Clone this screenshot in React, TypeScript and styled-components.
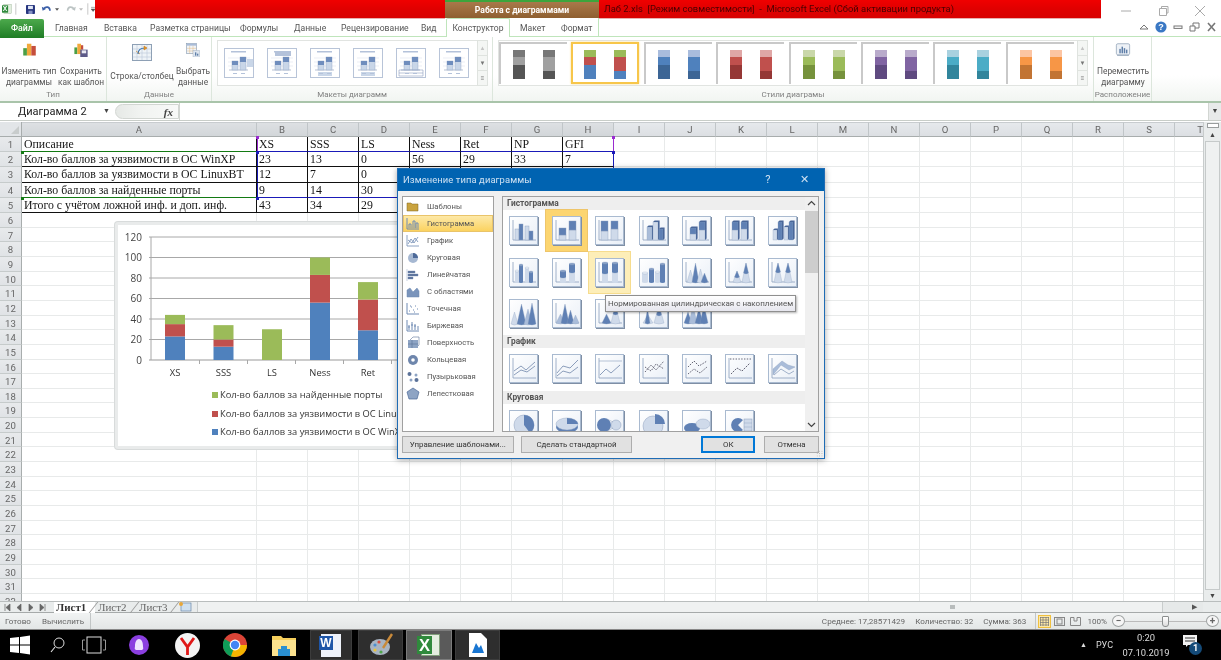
import React from 'react';
import styled, { createGlobalStyle } from 'styled-components';

const Global = createGlobalStyle`
  html, body { margin: 0; padding: 0; background: #fff; overflow: hidden; }
  * { box-sizing: border-box; }
`;
const UI = `Roboto, "Open Sans", sans-serif`;

const Page = styled.div`
  width: 1221px; height: 660px; display: flex; flex-direction: column; overflow: hidden;
  font-family: ${UI}; filter: blur(0.35px); background: #fff;
`;
const TitleRow = styled.div`display: flex; height: 18px; align-items: stretch; background: #fff;`;
const Qat = styled.div`width: 95px; display: flex; align-items: center; gap: 3px; padding-left: 2px;`;
const RedBand = styled.div<{ $w: number }>`
  width: ${p => p.$w}px; background: linear-gradient(#f00000, #e00000 50%, #d80000);
  box-shadow: 0 1px 0 #e8b0b0; color: #4a0000; font-size: 9.4px; line-height: 18px; white-space: pre; overflow: hidden; padding-left: 5px;
`;
const ChartTools = styled.div`
  width: 154px; background: linear-gradient(#a8794a, #8f5f30); border-top: 2px solid #3ca53c;
  color: #fff; font-weight: 700; font-size: 8.6px; text-align: center; line-height: 17px;
`;
const WinControls = styled.div`flex: 1; display: flex; justify-content: flex-end; gap: 25px; padding: 5px 15px 0 0;`;

const TabRow = styled.div`display: flex; height: 19px; align-items: stretch; position: relative; border-bottom: 1px solid #bfe5bb;`;
const FileTab = styled.div`
  width: 44px; height: 19px; margin-top: 1px; background: linear-gradient(#4ca94c, #1f7d25); color: #fff; font-size: 8.8px; font-weight: 500;
  text-align: center; line-height: 18px; border-radius: 2px 2px 0 0;
`;
const Tab = styled.div<{ $x: number }>`
  position: absolute; left: ${p => p.$x}px; top: 0; font-size: 8.6px; line-height: 20px; color: #555;
  white-space: nowrap;
`;
const ActiveTab = styled.div`
  position: absolute; left: 446px; top: 0; width: 64px; height: 19px; background: #fff; border: 1px solid #bfe5bb; border-bottom: none;
  border-radius: 2px 2px 0 0; font-size: 8.6px; line-height: 19px; color: #555; text-align: center;
`;
const ContextEdge = styled.div`
  position: absolute; left: 510px; top: 0; width: 89px; height: 18px; border-right: 1px solid #bfe5bb; pointer-events: none;
`;
const HelpRow = styled.div`position: absolute; right: 4px; top: 3px; display: flex; align-items: center; gap: 6px;`;

const Ribbon = styled.div`
  height: 66px; display: flex; background: linear-gradient(#fff, #fff 60%, #f2f5f2 100%); border-bottom: 2px solid #a9c4aa;
`;
const Group = styled.div<{ $w: number }>`
  width: ${p => p.$w}px; display: flex; flex-direction: column; border-right: 1px solid #dce6dc; flex: none;
`;
const GroupBody = styled.div`flex: 1; display: flex; min-height: 0;`;
const GroupLabel = styled.div`height: 14px; text-align: center; font-size: 8px; line-height: 15px; color: #808080; white-space: nowrap;`;
const BigButton = styled.div<{ $w: number }>`
  width: ${p => p.$w}px; display: flex; flex-direction: column; align-items: center; padding-top: 6px; flex: none;
  font-size: 8.4px; line-height: 10.5px; color: #555; text-align: center; white-space: nowrap;
  svg { height: 19px; margin-bottom: 9px; }
`;
const Gallery = styled.div<{ $w: number; $ml: number }>`
  width: ${p => p.$w}px; height: 46px; margin: 3px 0 0 ${p => p.$ml}px; background: #fff; border: 1px solid #e1e4e1;
  display: flex; align-items: center; position: relative; flex: none;
`;
const GalleryScroll = styled.div`
  position: absolute; right: -11px; top: -1px; width: 11px; height: 46px; border: 1px solid #dfe3df; background: #f4f6f4;
  display: flex; flex-direction: column; font-size: 6px; color: #777; text-align: center;
  span { flex: 1; line-height: 14px; border-bottom: 1px solid #dfe3df; }
  span:last-child { border-bottom: none; }
  span:first-child { color: #c4c4c4; }
`;
const StyleThumb = styled.div<{ $sel?: boolean }>`
  width: 68px; height: 42px; margin-right: 4.4px; flex: none; display: flex; justify-content: center; gap: 18px; padding-top: 6px;
  border-top: 2px solid #c9c9c9; border-left: 2px solid #c9c9c9; background: #fff;
  ${p => p.$sel ? 'border: 2px solid #f7c64a; box-shadow: 0 0 2px #f7d98a;' : ''}
`;
const StackBar = styled.div`width: 12px; height: 29px; display: flex; flex-direction: column;`;
const Seg = styled.div<{ $h: number; $c: string }>`height: ${p => p.$h}px; background: ${p => p.$c};`;

const FormulaBar = styled.div`height: 18px; display: flex; align-items: stretch; border-bottom: 1px solid #c8cdc8; background: #fff;`;
const NameBox = styled.div`width: 115px; font-size: 11px; line-height: 17px; padding-left: 18px; color: #222; position: relative;`;
const NameArrow = styled.span`position: absolute; right: 5px; top: 0; font-size: 7px; color: #444;`;
const FxWrap = styled.div`
  width: 64px; margin: 1px 0; display: flex; align-items: center; justify-content: flex-end; padding-right: 5px; background: linear-gradient(90deg,#e6e9e6,#f1f3f1 40%,#f8f9f8);
  border-radius: 9px 0 0 9px; border: 1px solid #d2d6d2; font: italic 700 11px "Liberation Serif", serif; color: #444;
`;
const FormulaInput = styled.div`flex: 1; border: 1px solid #d2d6d2; border-width: 0 1px;`;
const FormulaDrop = styled.div`width: 12px; font-size: 7px; color: #444; text-align: center; line-height: 17px; background: #e8eaea;`;

const Sheet = styled.div`height: 479px; position: relative; overflow: hidden; margin-top: 1px; display: flex; flex: none;`;
const GridWrap = styled.div`flex: 1; overflow: hidden; display: grid; grid-template-columns: 22px 235px repeat(19, 51px); grid-template-rows: 15px repeat(5, 15.2px) repeat(27, 14.67px); align-content: start;`;
const ColHead = styled.div<{ $on?: boolean }>`
  background: ${p => p.$on ? 'linear-gradient(#dde0e3,#d2d6d9)' : 'linear-gradient(#e6e9ec,#dcdfe3)'}; border-right: 1px solid #c0c5c8; border-bottom: 1px solid #a8adad; border-top: 1px solid #c8cccf;
  font-size: 9.6px; line-height: 13px; text-align: center; color: #666;
`;
const RowHead = styled.div`
  background: linear-gradient(#e8eaec,#e0e3e6); border-right: 1px solid #a8adad; border-bottom: 1px solid #c6cbcb;
  font-size: 9.6px; line-height: 15px; text-align: center; color: #666;
`;
const Corner = styled.div`background: #e2e5e8; border-right: 1px solid #a8adad; border-bottom: 1px solid #a8adad; position: relative;
  &::after { content: ''; position: absolute; right: 2px; bottom: 2px; border: 4px solid transparent; border-right-color: #c8cccc; border-bottom-color: #c8cccc; }
`;
const Cell = styled.div<{ $t?: boolean; $lft?: string; $bot?: string; $rgt?: string }>`
  border-right: 1px solid ${p => p.$rgt ? p.$rgt : p.$t ? '#111' : '#e8eaea'}; border-bottom: 1px solid ${p => p.$bot ? p.$bot : p.$t ? '#111' : '#e8eaea'};
  ${p => p.$lft ? `box-shadow: inset 1px 0 0 ${p.$lft};` : ''}
  font: ${p => p.$t ? '11.8px/15px "Liberation Serif", serif' : '10px sans-serif'}; color: #151515; padding-left: 2px; white-space: nowrap; overflow: hidden;
`;
const Handle = styled.div<{ $x: number; $y: number; $c: string }>`
  position: absolute; left: ${p => p.$x - 1.5}px; top: ${p => p.$y - 1.5}px; width: 3px; height: 3px; background: ${p => p.$c};
`;
const VScroll = styled.div`
  position: absolute; right: 0; top: 0; bottom: 0; width: 18px; background: #e9ecec; border-left: 1px solid #c8cccc;
  display: flex; flex-direction: column; align-items: center; font-size: 7px; color: #444; line-height: 10px;
`;
const VSplit = styled.div`width: 12px; height: 5px; background: #fff; border: 1px solid #9a9e9e; margin: 1px 0 2px;`;
const VThumb = styled.div`width: 15px; height: 452px; background: #eff1f1; border: 1px solid #c6caca; margin: 1px 0;`;

const ChartBox = styled.div`
  position: absolute; left: 115px; top: 100px; width: 340px; height: 227px; background: #fff; border: 3px solid #e9ebeb; border-radius: 3px; box-shadow: 0 0 0 1px #d8dbdb;
`;

const Dialog = styled.div`
  position: absolute; left: 397px; top: 46px; width: 428px; height: 291px; background: #f0f0f0; border: 1px solid #1f6cb5; box-shadow: 0 1px 6px rgba(0,0,0,.35);
  display: flex; flex-direction: column;
`;
const DlgTitle = styled.div`height: 22px; background: #0063b1; color: #cfe2f3; font-size: 9.4px; line-height: 21px; padding-left: 5px; display: flex; flex: none; letter-spacing: .1px;`;
const DlgTitleText = styled.span`flex: 1;`;
const DlgBtn = styled.span<{ $w: number }>`width: ${p => p.$w}px; color: #cfe2f3; text-align: center; font-size: 11px;`;
const DlgBody = styled.div`display: flex; gap: 8px; padding: 5px 5px 0 4px; height: 241px; flex: none;`;
const LeftPanel = styled.div`width: 92px; background: #fff; border: 1px solid #a0a0a0; padding-top: 1px; flex: none;`;
const LeftItem = styled.div<{ $sel?: boolean }>`
  height: 17px; display: flex; align-items: center; gap: 7px; padding-left: 3px; font-size: 7.7px; color: #555; white-space: nowrap;
  ${p => p.$sel ? 'background: linear-gradient(#fde9a8,#fbd260); border: 1px solid #e9c46a; padding-left: 2px;' : ''}
`;
const RightPanel = styled.div`flex: 1; background: #fff; border: 1px solid #a0a0a0; display: flex; overflow: hidden;`;
const RightList = styled.div`flex: 1; overflow: hidden; display: flex; flex-direction: column;`;
const SecHead = styled.div<{ $mt?: number }>`height: 13px; margin-top: ${p => p.$mt || 0}px; background: #eeeeee; font-size: 8.4px; font-weight: 700; color: #555; line-height: 12px; padding-left: 4px; flex: none;`;
const ThumbGrid = styled.div`display: grid; grid-template-columns: repeat(7, 29px); column-gap: 14.2px; row-gap: 12.6px; padding: 6px 0 0 6px; flex: none;`;
const ThumbCell = styled.div<{ $sel?: boolean; $hot?: boolean }>`
  width: 29px; height: 29px; background: linear-gradient(135deg,#fff,#e9eff7); border: 1px solid #a9bad0; box-shadow: 1px 1px 0 #7f8fa5; position: relative;
  ${p => p.$sel ? 'box-shadow: 1px 1px 0 #7f8fa5, 0 0 0 6px #fcd570, 0 0 0 7px #eec56a;' : ''}
  ${p => p.$hot ? 'box-shadow: 1px 1px 0 #7f8fa5, 0 0 0 6px #fdeeb8, 0 0 0 7px #f6dc8e;' : ''}
`;
const ListScroll = styled.div`
  width: 13px; background: #f0f0f0; display: flex; flex-direction: column; align-items: center; flex: none; justify-content: space-between; position: relative; padding: 3px 0;
`;
const ListThumb = styled.div`position: absolute; top: 14px; left: 0; width: 13px; height: 62px; background: #cdcdcd;`;
const DlgFoot = styled.div`display: flex; padding: 4px 5px 0 4px; align-items: center;`;
const DlgButton = styled.div<{ $w: number; $ml?: number; $def?: boolean }>`
  width: ${p => p.$w}px; margin-left: ${p => p.$ml || 0}px; height: 17px; background: #e1e1e1; border: ${p => p.$def ? '2px solid #0078d7' : '1px solid #adadad'};
  font-size: 7.9px; line-height: ${p => p.$def ? 13 : 15}px; text-align: center; color: #333; white-space: nowrap;
`;
const Tip = styled.div`
  position: absolute; left: 207px; top: 126px; height: 17px; padding: 0 2px; background: linear-gradient(#fff,#e6e6ee); border: 1px solid #8f8f8f; font-size: 8px; line-height: 15px; color: #555; white-space: nowrap; box-shadow: 1px 1px 2px rgba(0,0,0,.3); z-index: 3;
`;
const ResizeGrip = styled.div`
  position: absolute; right: 1px; bottom: 1px; width: 7px; height: 7px; background: radial-gradient(#aaa 40%, transparent 45%) 0 0 / 2.4px 2.4px;
`;

const SheetTabs = styled.div`height: 12px; display: flex; background: #e9ecec; border-top: 1px solid #b9bdbd; border-bottom: 1px solid #a6aaaa; flex: none; align-items: center; position: relative;`;
const TabNav = styled.div`width: 54px; flex: none; padding-left: 3px; display: flex;`;
const SheetTab = styled.div<{ $on?: boolean; $w: number }>`
  width: ${p => p.$w}px; height: 11px; flex: none; font: ${p => p.$on ? '700' : '400'} 11px/11px "Liberation Serif", serif; color: ${p => p.$on ? '#333' : '#666'}; padding-left: ${p => p.$on ? 2 : 3}px; background: ${p => p.$on ? '#fff' : 'transparent'}; white-space: nowrap; position: relative;
  &::after { content: ''; position: absolute; right: 1px; top: 0; bottom: 0; width: 1px; background: #999; transform: skewX(-38deg); }
`;
const HScroll = styled.div`position: absolute; left: 197px; right: 18px; top: 0; bottom: 0; background: #e6e9e9; border-left: 1px solid #c8cccc; display: flex; justify-content: flex-end; align-items: center; color: #555; font-size: 7px; padding-right: 6px;`;
const HThumb = styled.div`position: absolute; left: 0; width: 965px; top: 0; bottom: 0; background: #eff1f1; border-right: 1px solid #c8cccc;`;
const Grip = styled.div`position: absolute; left: 752px; top: 3px; width: 5px; height: 4px; background: #b8bcbc;`;

const StatusBar = styled.div`height: 17px; display: flex; align-items: center; background: linear-gradient(#f1f3f3,#e3e6e6); font-size: 8.1px; color: #666; flex: none; border-bottom: 1px solid #888; padding-right: 2px;`;
const StatusText = styled.span<{ $ml?: number; $auto?: boolean }>`margin-left: ${p => p.$auto ? 'auto' : `${p.$ml || 0}px`}; white-space: nowrap;`;
const StatusDiv = styled.div<{ $ml?: number }>`width: 1px; height: 16px; background: #c2c6c6; margin-left: ${p => p.$ml ?? 6}px;`;
const ViewBtn = styled.div<{ $on?: boolean; $ml: number }>`
  width: 13px; height: 13px; margin-left: ${p => p.$ml}px; border: 1px solid ${p => p.$on ? '#f0c040' : 'transparent'}; background: ${p => p.$on ? '#fde9a8' : 'transparent'}; display: flex; align-items: center; justify-content: center;
`;
const ZoomTrack = styled.div`width: 81px; height: 1px; background: #bbb; position: relative;`;
const ZoomKnob = styled.div`position: absolute; left: 37px; top: -5px; width: 7px; height: 11px; background: linear-gradient(#fff,#ddd); border: 1px solid #8a8e8e; border-radius: 1px 1px 3px 3px;`;
const ZoomRound = styled.div<{ $ml?: number }>`width: 13px; height: 12px; margin-left: ${p => p.$ml || 0}px; border-radius: 50%; border: 1px solid #9ca0a0; background: #f6f6f6; font-size: 10px; font-weight: 700; line-height: 9px; text-align: center; color: #666; flex: none;`;

const Taskbar = styled.div`height: 30px; background: #000; display: flex; align-items: stretch; flex: none;`;
const TaskSlot = styled.div<{ $w: number; $ml?: number; $box?: 'idle' | 'on' }>`
  width: ${p => p.$w}px; margin-left: ${p => p.$ml || 0}px; display: flex; align-items: center; justify-content: center; flex: none;
  ${p => p.$box === 'idle' ? 'background: #2e2e2e; box-shadow: inset 0 0 0 1px #3c3c3c;' : ''}
  ${p => p.$box === 'on' ? 'background: #5a5a5a; box-shadow: inset 0 0 0 1px #7c7c7c;' : ''}
`;
const Tray = styled.div`margin-left: auto; margin-right: 15px; display: flex; align-items: center; color: #ddd; font-size: 9px;`;
const Caret = styled.span`font-size: 7px; margin-right: 9px;`;
const Clock = styled.div`width: 56px; margin-left: 5px; text-align: center; line-height: 15px; font-size: 9.4px;`;
const Notify = styled.div`width: 32px; display: flex; justify-content: center; position: relative; height: 20px;`;
const Badge = styled.span`position: absolute; left: 15px; top: 7px; width: 13px; height: 13px; border-radius: 50%; background: #144a78; color: #fff; font-size: 9px; font-weight: 700; line-height: 13px; text-align: center;`;

/* ---- drawings ---- */
const B1 = '#5f80b4', B2 = '#a9bcd9', B3 = '#cfdaea', LN = '#8c9fbd';
function axes() { return <path d="M3 3V23H26" stroke={LN} strokeWidth=".8" fill="none" />; }
type K = string;
function Drawing({ k }: { k: K }) {
  const bar = (x: number, y: number, h: number, c: string, w = 5) => <rect x={x} y={y} width={w} height={h} fill={c} stroke={LN} strokeWidth=".4" />;
  const cyl = (x: number, y: number, h: number, c: string, w = 5) => <g><rect x={x} y={y} width={w} height={h} fill={c} /><ellipse cx={x + w / 2} cy={y + h} rx={w / 2} ry="1" fill={c} /><ellipse cx={x + w / 2} cy={y} rx={w / 2} ry="1" fill={c === B1 ? '#8aa2c8' : '#eef3f9'} stroke={LN} strokeWidth=".3" /></g>;
  const cone = (x: number, b: number, h: number, c: string, w = 7) => <path d={`M${x} ${b}L${x + w / 2} ${b - h}L${x + w} ${b}Q${x + w / 2} ${b + 2} ${x} ${b}Z`} fill={c} stroke={LN} strokeWidth=".3" />;
  const box3 = (x: number, y: number, h: number, c: string, w = 5) => <g><rect x={x} y={y} width={w} height={h} fill={c} stroke={LN} strokeWidth=".3" /><path d={`M${x} ${y}l1.6 -1.6h${w}l-1.6 1.6ZM${x + w} ${y}l1.6 -1.6v${h}l-1.6 1.6Z`} fill="#4a6799" /></g>;
  const ln = (d: string) => <path d={d} stroke="#7f93b3" strokeWidth=".9" fill="none" />;
  switch (k) {
    case 'c1': return <>{axes()}{bar(5, 12, 11, B3, 4)}{bar(9, 7, 16, B1, 4)}{bar(15, 9, 14, B3, 4)}{bar(19, 14, 9, B1, 4)}</>;
    case 'c2': return <>{axes()}{bar(6, 18, 5, B3, 7)}{bar(6, 11, 7, B1, 7)}{bar(16, 13, 10, B3, 7)}{bar(16, 4, 9, B1, 7)}</>;
    case 'c3': return <>{axes()}{bar(5, 14, 9, B3, 7)}{bar(5, 4, 10, B1, 7)}{bar(15, 12, 11, B3, 7)}{bar(15, 4, 8, B1, 7)}</>;
    case 'd1': return <>{axes()}{box3(7, 10, 13, B2, 5)}{box3(13, 5, 18, B3, 5)}{box3(19, 12, 11, B1, 4)}</>;
    case 'd2': return <>{axes()}{box3(7, 17, 6, B3, 6)}{box3(7, 11, 6, B1, 6)}{box3(16, 13, 10, B3, 6)}{box3(16, 5, 8, B1, 6)}</>;
    case 'd3': return <>{axes()}{box3(6, 13, 10, B3, 6)}{box3(6, 5, 8, B1, 6)}{box3(15, 12, 11, B3, 6)}{box3(15, 5, 7, B1, 6)}</>;
    case 'd4': return <>{box3(4, 13, 10, B3, 4)}{box3(9, 5, 18, B1, 4)}{box3(15, 10, 13, B3, 4)}{box3(20, 5, 18, B1, 4)}</>;
    case 'y1': return <>{axes()}{cyl(5, 12, 11, B3, 4)}{cyl(9, 6, 17, B1, 4)}{cyl(15, 9, 14, B3, 4)}{cyl(19, 13, 10, B1, 4)}</>;
    case 'y2': return <>{axes()}{cyl(7, 18, 5, B3, 6)}{cyl(7, 12, 6, B1, 6)}{cyl(16, 13, 10, B3, 6)}{cyl(16, 5, 8, B1, 6)}</>;
    case 'y3': return <>{axes()}{cyl(6, 14, 9, B3, 6)}{cyl(6, 4, 10, B1, 6)}{cyl(16, 13, 10, B3, 6)}{cyl(16, 4, 9, B1, 6)}</>;
    case 'y4': return <>{cyl(2, 14, 9, B3, 6)}{cyl(9, 10, 13, B1, 5)}{cyl(15, 13, 10, B3, 5)}{cyl(20, 5, 18, B1, 5)}</>;
    case 'k1': return <>{axes()}{cone(4, 23, 12, B3)}{cone(9, 23, 19, B1)}{cone(14, 23, 13, B3)}{cone(18, 23, 9, B1)}</>;
    case 'k2': return <>{axes()}{cone(7, 23, 11, B3, 8)}{cone(8.5, 18, 6, B1, 5)}{cone(16, 23, 19, B3, 8)}{cone(17.5, 14, 10, B1, 5)}</>;
    case 'k3': return <>{axes()}{cone(5, 23, 19, B3, 8)}{cone(6.5, 13, 9, B1, 5)}{cone(15, 23, 19, B3, 8)}{cone(16.5, 13, 9, B1, 5)}</>;
    case 'p1': return <>{cone(1, 24, 12, B3)}{cone(7, 24, 20, B1, 9)}{cone(14, 24, 15, B2, 8)}{cone(18, 24, 21, B1, 8)}</>;
    case 'p2': return <>{axes()}{cone(3, 23, 9, B2, 9)}{cone(8, 23, 19, B1, 8)}{cone(14, 23, 13, B1, 7)}{cone(19, 23, 8, B2, 7)}</>;
    case 'p3': return <>{axes()}{cone(6, 23, 9, B1, 9)}{cone(15, 23, 18, B3, 9)}{cone(17, 14, 9, B1, 5)}</>;
    case 'p4': return <>{cone(3, 23, 8, B3, 10)}{cone(14, 23, 18, B3, 10)}{cone(5, 23, 14, B1, 5)}{cone(16.5, 15, 10, B1, 5)}</>;
    case 'p5': return <>{cone(1, 23, 11, B1, 8)}{cone(6, 23, 18, B2, 8)}{cone(12, 23, 15, B1, 8)}{cone(17, 23, 18, B1, 8)}</>;
    case 'l1': return <>{axes()}{ln('M4 16L11 11L16 15L25 7')}{ln('M4 20L11 15L17 17L25 11')}</>;
    case 'l2': return <>{axes()}{ln('M4 18L10 11L17 13L25 5')}{ln('M4 21L10 16L17 18L25 12')}</>;
    case 'l3': return <>{axes()}<path d="M3 6H26" stroke={LN} strokeWidth=".6" />{ln('M4 20L10 14L15 18L24 10')}</>;
    case 'm1': return <>{axes()}<path d="M5 17L11 10L16 15L24 6M5 12L11 16L16 9L24 14" stroke="#556" strokeWidth=".9" strokeDasharray="1.6 1.2" fill="none" /></>;
    case 'm2': return <>{axes()}<path d="M5 12L11 6L16 11L24 6M5 19L11 14L17 18L24 12" stroke="#556" strokeWidth=".9" strokeDasharray="1.6 1.2" fill="none" /></>;
    case 'm3': return <>{axes()}<path d="M4 4H26" stroke="#556" strokeDasharray="1.4 1.4" strokeWidth=".9" /><path d="M5 19L11 13L16 16L24 8" stroke="#556" strokeWidth=".9" strokeDasharray="1.8 1" fill="none" /></>;
    case 'm4': return <>{axes()}<path d="M4 14L13 6L19 10L26 12L20 15L12 10L4 20Z" fill={B2} stroke={LN} strokeWidth=".4" /><path d="M5 20L12 14L20 19L25 16" stroke={LN} strokeWidth=".8" fill="none" /></>;
    case 'e1': return <><circle cx="14" cy="14" r="10" fill={B3} stroke={LN} strokeWidth=".5" /><path d="M14 14V4A10 10 0 0 1 20 22Z" fill={B1} /></>;
    case 'e2': return <><ellipse cx="14" cy="16" rx="11" ry="6" fill={B1} /><ellipse cx="14" cy="13" rx="11" ry="6" fill={B3} stroke={LN} strokeWidth=".4" /><path d="M14 13L25 13A11 6 0 0 0 14 7Z" fill={B1} /></>;
    case 'e3': return <><circle cx="8" cy="14" r="7" fill={B1} /><circle cx="20" cy="14" r="5" fill={B3} stroke={LN} strokeWidth=".5" /><path d="M11 8L17 11M11 20L17 17" stroke={LN} strokeWidth=".5" /></>;
    case 'e4': return <><circle cx="13" cy="15" r="10" fill={B3} stroke={LN} strokeWidth=".5" /><path d="M15 13V3A10 10 0 0 1 25 13Z" fill={B1} /></>;
    case 'e5': return <><ellipse cx="9" cy="17" rx="8" ry="5" fill={B1} /><ellipse cx="20" cy="13" rx="7" ry="5" fill={B3} stroke={LN} strokeWidth=".4" /></>;
    case 'e6': return <><path d="M12 14L17 9A7 7 0 1 0 17 19Z" fill={B1} /><rect x="18" y="8" width="8" height="12" fill={B3} stroke={LN} strokeWidth=".5" /><path d="M18 12H26M18 16H26" stroke={LN} strokeWidth=".4" /></>;
    default: return null;
  }
}
const Thumb = ({ k, sel, hot }: { k: K; sel?: boolean; hot?: boolean }) => (
  <ThumbCell $sel={sel} $hot={hot}><svg width="27" height="27" viewBox="0 0 27 27"><Drawing k={k} /></svg></ThumbCell>
);

const LayoutThumbWrap = styled.div<{ $first?: boolean }>`margin-left: ${p => p.$first ? 6 : 13}px; flex: none; height: 30px; display: flex;`;
const LayoutThumb = ({ v }: { v: number }) => (
  <LayoutThumbWrap $first={v === 0}>
    <svg width="30" height="30" viewBox="0 0 30 30">
      <rect x=".5" y=".5" width="29" height="29" fill="#fff" stroke="#b8c4d8" />
      <rect x="7" y="3" width="15" height="1.5" fill="#b4c2da" />
      {v === 1 && <rect x="8" y="3" width="16" height="5" fill="#b4c2da" />}
      <path d="M5 22H24" stroke="#9aa8c0" strokeWidth=".7" />
      <path d="M4 10H26M4 14H26M4 18H26" stroke="#dde3ee" strokeWidth=".6" />
      <rect x="8" y="13" width="6" height="9" fill="#c9d6e8" stroke="#8da0c0" strokeWidth=".4" />
      <rect x="8" y="13" width="6" height="4" fill="#6f8dbd" />
      <rect x="16" y="9" width="6" height="13" fill="#c9d6e8" stroke="#8da0c0" strokeWidth=".4" />
      <rect x="16" y="9" width="6" height="5" fill="#6f8dbd" />
      {v === 0 && <rect x="23" y="11" width="6" height="8" fill="#c9d6e8" />}
      {(v === 2 || v === 3) && <rect x="8" y="24" width="14" height="4" fill="#c9d6e8" />}
      {v === 4 && <path d="M3 22H27V28H3ZM3 25H27" stroke="#8da0c0" strokeWidth=".6" fill="none" />}
      <rect x="9" y="25" width="4" height="1" fill="#b4c2da" /><rect x="17" y="25" width="4" height="1" fill="#b4c2da" />
    </svg>
  </LayoutThumbWrap>
);

const MiniBars = () => (
  <svg width="19" viewBox="0 0 19 19">
    <rect x="1" y="7" width="5" height="10" fill="#4b9f46" /><rect x="6" y="1" width="6" height="16" fill="#f2a83c" /><rect x="12" y="4" width="6" height="13" fill="#c54e3c" />
  </svg>
);

const ExcelIcon = ({ s = 11 }: { s?: number }) => (
  <svg width={s} height={s} viewBox="0 0 16 16">
    <rect x="3" y="1" width="12" height="14" fill="#e4efe0" stroke="#7d9e78" strokeWidth=".6" />
    <rect x="0" y="2" width="10" height="12" fill="#2f8a3c" />
    <text x="5" y="12" textAnchor="middle" fontFamily="Liberation Sans, sans-serif" fontSize="11" fontWeight="700" fill="#fff">X</text>
  </svg>
);

const heads = ['A','B','C','D','E','F','G','H','I','J','K','L','M','N','O','P','Q','R','S','T'];
const table = [
  ['Описание','XS','SSS','LS','Ness','Ret','NP','GFI'],
  ['Кол-во баллов за уязвимости в ОС WinXP','23','13','0','56','29','33','7'],
  ['Кол-во баллов за уязвимости в ОС LinuxBT','12','7','0','','','',''],
  ['Кол-во баллов за найденные порты','9','14','30','','','',''],
  ['Итого с учётом ложной инф. и доп. инф.','43','34','29','','','',''],
];

const bars = [
  { n: 'XS', x: 165, v: [23, 12, 9] },
  { n: 'SSS', x: 213.5, v: [13, 7, 14] },
  { n: 'LS', x: 262, v: [0, 0, 30] },
  { n: 'Ness', x: 310, v: [56, 27, 17] },
  { n: 'Ret', x: 358, v: [29, 30, 17] },
];
const cols = ['#4f81bd', '#c0504d', '#9bbb59'];

const ChartSvg = () => (
  <svg width="334" height="221" viewBox="118 225 334 221" style={{ display: 'block' }}>
    {[120, 100, 80, 60, 40, 20, 0].map(t => {
      const y = 360 - t * 1.025;
      return <g key={t}>
        <path d={`M149 ${y}H450`} stroke={t === 0 ? '#999' : '#a8a8a8'} strokeWidth="1" />
        <text x="142" y={y + 3.6} textAnchor="end" fontSize="10" fontFamily="Open Sans, sans-serif" fill="#444">{t}</text>
      </g>;
    })}
    <path d="M151 237V360" stroke="#a8a8a8" />
    {[199.5, 247.5, 295.5, 343.5, 391.5].map(x => <path key={x} d={`M${x} 360v4`} stroke="#a8a8a8" />)}
    {bars.map(b => {
      let y = 360;
      return <g key={b.n}>
        {b.v.map((v, i) => { const h = v * 1.025; y -= h; return h ? <rect key={i} x={b.x} y={y} width="20" height={h} fill={cols[i]} /> : null; })}
        <text x={b.x + 10} y="376" textAnchor="middle" fontSize="9.4" fontFamily="Open Sans, sans-serif" fill="#333">{b.n}</text>
      </g>;
    })}
    {[['Кол-во баллов за найденные порты', 2, 394], ['Кол-во баллов за уязвимости в ОС LinuxBT', 1, 413], ['Кол-во баллов за уязвимости в ОС WinXP', 0, 431]].map(([t, c, y]) => (
      <g key={String(t)}>
        <rect x="212" y={Number(y) - 2} width="6" height="6" fill={cols[Number(c)]} />
        <text x="220" y={Number(y) + 4} fontSize="9.3" fontFamily="Open Sans, sans-serif" fill="#333">{String(t)}</text>
      </g>
    ))}
  </svg>
);

const CatIcon = ({ i }: { i: number }) => {
  const c = '#6f8ab3';
  const p = [
    <path d="M1 3H5L6 4H12V11H1Z" fill="#c9a33f" stroke="#7e6420" strokeWidth=".5" />,
    <path d="M1 1V12H13M3 11V7H5V11M7 11V4H9V11M10 11V6H12V11" stroke={c} fill="none" strokeWidth="1" />,
    <path d="M1 1V12H13M2 10L5 5L8 9L12 3M2 6L6 9L9 4L12 8" stroke={c} fill="none" strokeWidth=".8" />,
    <><circle cx="7" cy="7" r="5" fill="#a6b8d2" /><path d="M7 7V2A5 5 0 0 1 12 7Z" fill="#4e6a99" /></>,
    <path d="M1 1V13M2 3H9V5H2ZM2 6H12V8H2ZM2 9H7V11H2Z" fill="#5b7299" stroke={c} strokeWidth=".4" />,
    <path d="M1 11V5L4 3L7 7L11 3L13 6V12H1Z" fill="#7a94bb" stroke={c} strokeWidth=".5" />,
    <path d="M1 1V12H13M3 9h1M5 5h1M7 8h1M9 4h1M11 7h1M4 4h1M8 10h1" stroke={c} fill="none" strokeWidth="1" />,
    <path d="M1 1V12H13M3 11V6M6 11V3M9 11V5M12 11V7M2 8H4M5 6H7M8 7H10" stroke={c} fill="none" strokeWidth="1" />,
    <><rect x="2" y="4" width="10" height="8" fill="#8ea4c4" /><path d="M4 4L7 1H13V9L12 10M2 8H12M6 4V12" stroke="#5b7299" strokeWidth=".6" fill="none" /></>,
    <><circle cx="7" cy="7" r="5" fill="#6e86ac" /><circle cx="7" cy="7" r="1.8" fill="#fff" /></>,
    <><circle cx="3.5" cy="4" r="2" fill="#5b7299" /><circle cx="10" cy="5" r="1.5" fill="#8ea4c4" /><circle cx="5" cy="10" r="1.5" fill="#8ea4c4" /><circle cx="10.5" cy="10" r="2" fill="#5b7299" /></>,
    <path d="M7 1L13 5L11 12H3L1 5Z" fill="#8ea4c4" stroke="#4e6a99" strokeWidth=".7" />,
  ];
  return <svg width="14" height="14" viewBox="0 0 14 14" style={{ flex: 'none' }}>{p[i]}</svg>;
};

const cats = ['Шаблоны','Гистограмма','График','Круговая','Линейчатая','С областями','Точечная','Биржевая','Поверхность','Кольцевая','Пузырьковая','Лепестковая'];

const styleSets: string[][] = [
  ['#555','#a0a0a0','#777'],
  ['#4f81bd','#c0504d','#9bbb59'],
  ['#3c6595','#4f81bd','#a9bcdd'],
  ['#953735','#c0504d','#dfa7a6'],
  ['#76923c','#9bbb59','#c9d7a9'],
  ['#5f4a80','#8064a2','#b9abcb'],
  ['#31859c','#4bacc6','#a9d1df'],
  ['#c27433','#f79646','#fcc5a3'],
];

const PURPLE = '#9a2bd0', BLUE = '#1a1ab8', GREEN = '#137a13';
const handles: [number, number, string][] = [
  [257, 15, PURPLE], [613, 15, PURPLE], [257, 30, BLUE], [613, 30, BLUE], [257, 76, BLUE],
  [22, 30, GREEN], [22, 76, GREEN],
];

export default function App() {
  return (
    <Page>
      <Global />
      <TitleRow>
        <Qat>
          <ExcelIcon s={12} />
          <svg width="10" height="14" viewBox="0 0 10 14"><path d="M1 0V14" stroke="#bbb" /></svg>
          <svg width="11" height="11" viewBox="0 0 11 11"><rect width="11" height="11" rx="1" fill="#27367f" /><rect x="2.5" y="1" width="6" height="4" fill="#dfe6f5" /><rect x="3" y="7" width="5" height="4" fill="#8492c5" /></svg>
          <svg width="14" height="11" viewBox="0 0 14 11" style={{ marginLeft: 3 }}><path d="M3 5C6 1 11 2 11 7" stroke="#3b5fa8" strokeWidth="2" fill="none" /><path d="M1 2L2 7L6 5Z" fill="#3b5fa8" /></svg>
          <svg width="6" height="6" viewBox="0 0 6 6"><path d="M0 2H5L2.5 5Z" fill="#555" /></svg>
          <svg width="12" height="11" viewBox="0 0 12 11" style={{ marginLeft: 3 }}><path d="M10 5C7 1 2 2 2 7" stroke="#bcc4c4" strokeWidth="2" fill="none" /><path d="M12 2L11 7L7 5Z" fill="#bcc4c4" /></svg>
          <svg width="6" height="6" viewBox="0 0 6 6"><path d="M0 2H5L2.5 5Z" fill="#bbb" /></svg>
          <svg width="10" height="14" viewBox="0 0 10 14"><path d="M1 0V14" stroke="#bbb" /><path d="M5 5H10M5 7H10L7.5 10Z" stroke="#555" strokeWidth=".6" fill="#555" /></svg>
        </Qat>
        <RedBand $w={350} />
        <ChartTools>Работа с диаграммами</ChartTools>
        <RedBand $w={502}>Лаб 2.xls  [Режим совместимости]  -  Microsoft Excel (Сбой активации продукта)</RedBand>
        <WinControls>
          <svg width="12" height="12" viewBox="0 0 12 12"><path d="M1 6H11" stroke="#aaa" /></svg>
          <svg width="12" height="12" viewBox="0 0 12 12"><path d="M2.5 3.5H9.5V10.5H2.5ZM4.5 3V1.5H11V8H10" stroke="#aaa" fill="none" /></svg>
          <svg width="12" height="12" viewBox="0 0 12 12"><path d="M1 1L11 11M11 1L1 11" stroke="#aaa" /></svg>
        </WinControls>
      </TitleRow>

      <TabRow>
        <FileTab>Файл</FileTab>
        {[['Главная',55],['Вставка',104],['Разметка страницы',150],['Формулы',240],['Данные',294],['Рецензирование',341],['Вид',421]].map(([t,x]) => <Tab key={t} $x={Number(x)}>{t}</Tab>)}
        <ActiveTab>Конструктор</ActiveTab>
        <Tab $x={520}>Макет</Tab>
        <Tab $x={561}>Формат</Tab>
        <ContextEdge />
        <HelpRow>
          <svg width="10" height="10" viewBox="0 0 10 10"><path d="M1 7L5 3L9 7Z" fill="none" stroke="#777" /></svg>
          <svg width="12" height="12" viewBox="0 0 12 12"><circle cx="6" cy="6" r="5.6" fill="#3a78c4" /><text x="6" y="9.2" textAnchor="middle" fontSize="9" fontWeight="700" fill="#fff" fontFamily="Liberation Sans, sans-serif">?</text></svg>
          <svg width="10" height="10" viewBox="0 0 10 10"><rect x="1" y="4" width="8" height="2.4" fill="none" stroke="#777" /></svg>
          <svg width="11" height="10" viewBox="0 0 11 10"><path d="M1 4H6V9H1ZM4 4V1H10V6H6" fill="none" stroke="#777" /></svg>
          <svg width="11" height="10" viewBox="0 0 11 10"><path d="M2 1L9 9M9 1L2 9" stroke="#777" strokeWidth="1.6" /></svg>
        </HelpRow>
      </TabRow>

      <Ribbon>
        <Group $w={107}>
          <GroupBody>
            <BigButton $w={58}><MiniBars />Изменить тип<br />диаграммы</BigButton>
            <BigButton $w={46}>
              <svg width="20" viewBox="0 0 20 19"><rect x="1" y="6" width="4" height="9" fill="#4b9f46" /><rect x="5" y="1" width="5" height="14" fill="#f2a83c" /><rect x="10" y="3" width="3" height="6" fill="#c54e3c" /><rect x="9" y="9" width="10" height="10" fill="#5d5a88" /><rect x="11" y="10" width="6" height="4" fill="#e9e9f2" /></svg>
              Сохранить<br />как шаблон
            </BigButton>
          </GroupBody>
          <GroupLabel>Тип</GroupLabel>
        </Group>
        <Group $w={105}>
          <GroupBody>
            <BigButton $w={70}>
              <svg width="20" viewBox="0 0 20 19"><rect x=".5" y="1.5" width="19" height="16" fill="#eef3f7" stroke="#8ea0b5" /><path d="M1 6H19M1 10H19M1 14H19M5 2V17M10 2V17M15 2V17" stroke="#b9c8d8" strokeWidth=".6" /><path d="M6 11C6 7 9 5 13 5" stroke="#2a6db0" strokeWidth="1.2" fill="none" /><path d="M4 8L8 11M12 3V7L15 5Z" fill="#e0962a" stroke="#c77b1a" strokeWidth=".6" /></svg>
              Строка/столбец
            </BigButton>
            <BigButton $w={32}>
              <svg width="20" viewBox="0 0 20 21"><rect x=".5" y=".5" width="15" height="15" fill="#f1f4f8" stroke="#8ea0b5" /><rect x="1" y="1" width="14" height="3" fill="#a9bcd9" /><path d="M1 8H15M1 12H15M5 4V16M10 4V16" stroke="#e0b070" strokeWidth=".6" /><rect x="10" y="11" width="10" height="10" fill="#dfe6ef" stroke="#8ea0b5" strokeWidth=".5" /><rect x="13" y="14" width="2" height="5" fill="#5f7fa8" /><rect x="16" y="16" width="2" height="3" fill="#5f7fa8" /></svg>
              Выбрать<br />данные
            </BigButton>
          </GroupBody>
          <GroupLabel>Данные</GroupLabel>
        </Group>
        <Group $w={281}>
          <GroupBody>
            <Gallery $w={261} $ml={5}>
              {[0,1,2,3,4,5].map(v => <LayoutThumb key={v} v={v} />)}
              <GalleryScroll><span>▲</span><span>▼</span><span>≡</span></GalleryScroll>
            </Gallery>
          </GroupBody>
          <GroupLabel>Макеты диаграмм</GroupLabel>
        </Group>
        <Group $w={601}>
          <GroupBody>
            <Gallery $w={580} $ml={5}>
              {styleSets.map((s, i) => (
                <StyleThumb key={i} $sel={i === 1}>
                  <StackBar><Seg $h={7} $c={s[2]} /><Seg $h={8} $c={s[1]} /><Seg $h={14} $c={s[0]} /></StackBar>
                  <StackBar><Seg $h={7} $c={s[2]} /><Seg $h={14} $c={s[1]} /><Seg $h={8} $c={s[0]} /></StackBar>
                </StyleThumb>
              ))}
              <GalleryScroll><span>▲</span><span>▼</span><span>≡</span></GalleryScroll>
            </Gallery>
          </GroupBody>
          <GroupLabel>Стили диаграмы</GroupLabel>
        </Group>
        <Group $w={58}>
          <GroupBody>
            <BigButton $w={58}>
              <svg width="20" viewBox="0 0 20 19"><rect x="1" y="1" width="18" height="15" rx="2" fill="#eef2f7" stroke="#8ea0b5" /><rect x="5" y="8" width="2" height="6" fill="#5f7fa8" /><rect x="8" y="5" width="2" height="9" fill="#5f7fa8" /><rect x="11" y="7" width="2" height="7" fill="#5f7fa8" /><rect x="14" y="9" width="2" height="5" fill="#5f7fa8" /><path d="M2 17H18" stroke="#8ea0b5" /></svg>
              Переместить<br />диаграмму
            </BigButton>
          </GroupBody>
          <GroupLabel>Расположение</GroupLabel>
        </Group>
      </Ribbon>

      <FormulaBar>
        <NameBox>Диаграмма 2<NameArrow>▼</NameArrow></NameBox>
        <FxWrap>fx</FxWrap>
        <FormulaInput />
        <FormulaDrop>▼</FormulaDrop>
      </FormulaBar>

      <Sheet>
        <GridWrap>
          <Corner />
          {heads.map((h, i) => <ColHead key={h} $on={i < 8}>{h}</ColHead>)}
          {Array.from({ length: 32 }).map((_, r) => (
            <React.Fragment key={r}>
              <RowHead>{r + 1}</RowHead>
              {heads.map((h, c) => {
                const inT = r < 5 && c < 8;
                const inRange = r >= 1 && r <= 3 && c >= 1 && c <= 7;
                return (
                  <Cell
                    key={h}
                    $t={inT}
                    $lft={c === 1 && r === 0 ? PURPLE : c === 1 && inRange ? BLUE : undefined}
                    $rgt={c === 7 && r === 0 ? PURPLE : c === 7 && inRange ? BLUE : undefined}
                    $bot={(r === 3 || r === 0) && c === 0 ? GREEN : (r === 0 || r === 3) && c >= 1 && c < 8 ? BLUE : undefined}
                  >
                    {inT ? table[r][c] : ''}
                  </Cell>
                );
              })}
            </React.Fragment>
          ))}
        </GridWrap>
        {handles.map(([x, y, c], i) => <Handle key={i} $x={x} $y={y} $c={c} />)}
        <VScroll><VSplit />▲<VThumb />▼</VScroll>
        <ChartBox><ChartSvg /></ChartBox>
        <Dialog>
          <DlgTitle>
            <DlgTitleText>Изменение типа диаграммы</DlgTitleText>
            <DlgBtn $w={36}>?</DlgBtn>
            <DlgBtn $w={38}>✕</DlgBtn>
          </DlgTitle>
          <DlgBody>
            <LeftPanel>
              {cats.map((c, i) => <LeftItem key={c} $sel={i === 1}><CatIcon i={i} />{c}</LeftItem>)}
            </LeftPanel>
            <RightPanel>
              <RightList>
                <SecHead>Гистограмма</SecHead>
                <ThumbGrid>
                  <Thumb k="c1" /><Thumb k="c2" sel /><Thumb k="c3" /><Thumb k="d1" /><Thumb k="d2" /><Thumb k="d3" /><Thumb k="d4" />
                  <Thumb k="y1" /><Thumb k="y2" /><Thumb k="y3" hot /><Thumb k="y4" /><Thumb k="k1" /><Thumb k="k2" /><Thumb k="k3" />
                  <Thumb k="p1" /><Thumb k="p2" /><Thumb k="p3" /><Thumb k="p4" /><Thumb k="p5" />
                </ThumbGrid>
                <SecHead $mt={7}>График</SecHead>
                <ThumbGrid>
                  <Thumb k="l1" /><Thumb k="l2" /><Thumb k="l3" /><Thumb k="m1" /><Thumb k="m2" /><Thumb k="m3" /><Thumb k="m4" />
                </ThumbGrid>
                <SecHead $mt={8}>Круговая</SecHead>
                <ThumbGrid>
                  <Thumb k="e1" /><Thumb k="e2" /><Thumb k="e3" /><Thumb k="e4" /><Thumb k="e5" /><Thumb k="e6" />
                </ThumbGrid>
              </RightList>
              <ListScroll>
                <svg width="9" height="6" viewBox="0 0 9 6"><path d="M1 5L4.5 1.5L8 5" stroke="#444" strokeWidth="1.2" fill="none" /></svg>
                <ListThumb />
                <svg width="9" height="6" viewBox="0 0 9 6"><path d="M1 1L4.5 4.5L8 1" stroke="#444" strokeWidth="1.2" fill="none" /></svg>
              </ListScroll>
            </RightPanel>
          </DlgBody>
          <DlgFoot>
            <DlgButton $w={112}>Управление шаблонами...</DlgButton>
            <DlgButton $w={112} $ml={7}>Сделать стандартной</DlgButton>
            <DlgButton $w={54} $ml={69} $def>ОК</DlgButton>
            <DlgButton $w={55} $ml={9}>Отмена</DlgButton>
          </DlgFoot>
          <Tip>Нормированная цилиндрическая с накоплением</Tip>
          <ResizeGrip />
        </Dialog>
      </Sheet>

      <SheetTabs>
        <TabNav>
          <svg width="44" height="9" viewBox="0 0 44 9">
            <path d="M2 1V8M7 1L3 4.5L7 8ZM18 1L14 4.5L18 8ZM26 1L30 4.5L26 8ZM37 1L41 4.5L37 8ZM42 1V8" fill="#666" stroke="#666" strokeWidth=".7" />
          </svg>
        </TabNav>
        <SheetTab $on $w={41}>Лист1</SheetTab>
        <SheetTab $w={41}>Лист2</SheetTab>
        <SheetTab $w={40}>Лист3</SheetTab>
        <svg width="16" height="10" viewBox="0 0 16 10" style={{ marginLeft: 2 }}><rect x="3" y="1" width="10" height="8" fill="#cfe0f0" stroke="#6a88a8" strokeWidth=".7" /><circle cx="3" cy="2" r="2" fill="#e8a73a" /></svg>
        <HScroll><HThumb><Grip /></HThumb>▶</HScroll>
      </SheetTabs>

      <StatusBar>
        <StatusText $ml={5}>Готово</StatusText>
        <StatusText $ml={11}>Вычислить</StatusText>
        <StatusDiv />
        <StatusText $auto>Среднее: 17,28571429</StatusText>
        <StatusText $ml={10}>Количество: 32</StatusText>
        <StatusText $ml={10}>Сумма: 363</StatusText>
        <StatusDiv $ml={9} />
        <ViewBtn $on $ml={2}><svg width="9" height="9" viewBox="0 0 9 9"><path d="M0 .5H9M0 3H9M0 5.5H9M0 8H9M.5 0V9M3 0V9M6 0V9M8.5 0V9" stroke="#777" strokeWidth=".7" /></svg></ViewBtn>
        <ViewBtn $ml={2}><svg width="11" height="9" viewBox="0 0 11 9"><rect x=".5" y=".5" width="10" height="8" fill="none" stroke="#888" /><rect x="3" y="2" width="5" height="5" fill="none" stroke="#888" /></svg></ViewBtn>
        <ViewBtn $ml={3}><svg width="11" height="9" viewBox="0 0 11 9"><path d="M.5 8.5V.5H4V4H7V.5H10.5V8.5Z" fill="none" stroke="#888" /></svg></ViewBtn>
        <StatusText $ml={5}>100%</StatusText>
        <ZoomRound $ml={5}>−</ZoomRound>
        <ZoomTrack><ZoomKnob /></ZoomTrack>
        <ZoomRound>+</ZoomRound>
      </StatusBar>

      <Taskbar>
        <TaskSlot $w={40}>
          <svg width="22" height="20" viewBox="0 0 22 20"><path d="M1 3L10 2V9.5H1ZM11 2L21 .5V9.5H11ZM1 10.5H10V18L1 17ZM11 10.5H21V19.5L11 18Z" fill="#fff" /></svg>
        </TaskSlot>
        <TaskSlot $w={34}>
          <svg width="16" height="18" viewBox="0 0 16 18"><circle cx="10" cy="7" r="5" fill="none" stroke="#ddd" /><path d="M6 11L2 16" stroke="#ddd" strokeWidth="1.2" /></svg>
        </TaskSlot>
        <TaskSlot $w={40}>
          <svg width="24" height="18" viewBox="0 0 24 18"><rect x="5" y="1" width="14" height="16" fill="none" stroke="#ddd" /><path d="M3 4H.5V14H3M21 4H23.5V14H21" fill="none" stroke="#999" /></svg>
        </TaskSlot>
        <TaskSlot $w={50}>
          <svg width="20" height="20" viewBox="0 0 20 20"><circle cx="10" cy="10" r="10" fill="#8b3fe0" /><path d="M10 4C7 4 6 8 6 11C6 13 5 14 7 15L13 15C15 14 14 13 14 11C14 8 13 4 10 4Z" fill="#efe4ff" /></svg>
        </TaskSlot>
        <TaskSlot $w={47}>
          <svg width="25" height="25" viewBox="0 0 25 25"><circle cx="12.5" cy="12.5" r="12.5" fill="#f3f3f3" /><path d="M6 5L12.5 14L19 5M12.5 14V22" stroke="#e01818" strokeWidth="2.8" fill="none" /></svg>
        </TaskSlot>
        <TaskSlot $w={48}>
          <svg width="24" height="24" viewBox="0 0 24 24"><circle cx="12" cy="12" r="12" fill="#db4437" /><path d="M12 12L1.6 6A12 12 0 0 0 12 24Z" fill="#0f9d58" /><path d="M12 12H24A12 12 0 0 1 8 23.3Z" fill="#f4b400" /><circle cx="12" cy="12" r="5.4" fill="#fff" /><circle cx="12" cy="12" r="4.2" fill="#4285f4" /></svg>
        </TaskSlot>
        <TaskSlot $w={49}>
          <svg width="24" height="22" viewBox="0 0 24 22"><path d="M0 2H9L11 4H24V22H0Z" fill="#f6cf5c" /><rect y="6" width="24" height="16" fill="#fbe28f" /><rect x="6" y="15" width="12" height="7" fill="#2a8fd0" /><rect x="9" y="12" width="6" height="3" fill="#2a8fd0" /></svg>
        </TaskSlot>
        <TaskSlot $w={42} $ml={2} $box="idle">
          <svg width="24" height="25" viewBox="0 0 24 25"><rect x="2" y="1" width="20" height="23" fill="#eef2fa" /><rect x="0" y="3" width="14" height="14" fill="#1e56a8" /><text x="7" y="14" textAnchor="middle" fontSize="12" fontWeight="700" fill="#fff" fontFamily="Liberation Sans, sans-serif">W</text></svg>
        </TaskSlot>
        <TaskSlot $w={45} $ml={6} $box="idle">
          <svg width="24" height="24" viewBox="0 0 24 24"><ellipse cx="11" cy="14" rx="10" ry="8" fill="#a9b4c2" /><circle cx="6" cy="12" r="1.6" fill="#4c8fd0" /><circle cx="10" cy="9" r="1.6" fill="#d84e3c" /><circle cx="6" cy="17" r="1.6" fill="#e8c33a" /><circle cx="12" cy="19" r="1.6" fill="#4fa54a" /><path d="M23 1L14 15" stroke="#c98a3a" strokeWidth="2.4" /></svg>
        </TaskSlot>
        <TaskSlot $w={46} $ml={3} $box="on"><ExcelIcon s={24} /></TaskSlot>
        <TaskSlot $w={45} $ml={3} $box="idle">
          <svg width="18" height="24" viewBox="0 0 18 24"><path d="M0 0H12L18 6V24H0Z" fill="#fff" /><path d="M3 20L7 10L10 15L12 12L15 20Z" fill="#1976d2" /></svg>
        </TaskSlot>
        <Tray>
          <Caret>▲</Caret>
          <span>РУС</span>
          <Clock>0:20<br />07.10.2019</Clock>
          <Notify>
            <svg width="14" height="13" viewBox="0 0 14 13"><path d="M0 0H14V10H5L3 12V10H0Z" fill="#f2f2f2" /><path d="M2 3H12M2 6H12" stroke="#333" /></svg>
            <Badge>1</Badge>
          </Notify>
        </Tray>
      </Taskbar>
    </Page>
  );
}
